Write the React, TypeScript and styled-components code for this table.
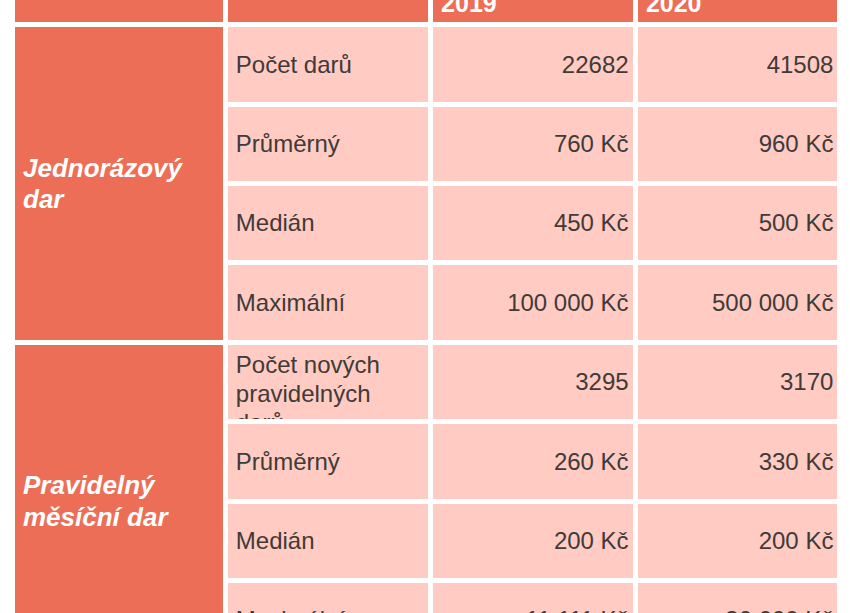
import React from "react";
import styled, { createGlobalStyle } from "styled-components";

const GlobalStyle = createGlobalStyle`
  html, body {
    margin: 0;
    padding: 0;
    background: #ffffff;
  }
  body {
    font-family: "Liberation Sans", Arial, Helvetica, sans-serif;
  }
`;

const ORANGE = "#ec6e56";
const PINK = "#ffcbc2";
const TEXT = "#403a39";

const Table = styled.div`
  display: grid;
  grid-template-columns: 207.5px 200px 199.5px 199.5px;
  grid-template-rows: 40px;
  grid-auto-rows: 74.4px;
  column-gap: 5.3px;
  row-gap: 5px;
  margin: -17.7px 0 0 15px;
  width: max-content;
`;

const HeadCell = styled.div`
  background: ${ORANGE};
  color: #ffffff;
  font-size: 25px;
  font-weight: 700;
  line-height: 1.2;
  display: flex;
  align-items: center;
  padding: 1px 8px 0;
`;

const GroupCell = styled.div<{ $span: number }>`
  grid-row: span ${(p) => p.$span};
  background: ${ORANGE};
  color: #ffffff;
  font-size: 26px;
  font-weight: 700;
  font-style: italic;
  line-height: 1.21;
  display: flex;
  align-items: center;
  padding: 1px 8px 0;
  overflow: hidden;
`;

const Cell = styled.div<{ $align?: "left" | "right" }>`
  background: ${PINK};
  color: ${TEXT};
  font-size: 24px;
  line-height: 1.2;
  display: flex;
  align-items: safe center;
  justify-content: ${(p) => (p.$align === "right" ? "flex-end" : "flex-start")};
  text-align: ${(p) => p.$align ?? "left"};
  padding: ${(p) => (p.$align === "right" ? "6.5px 4px 5.5px 8px" : "6.5px 8px 5.5px")};
  overflow: hidden;
  box-sizing: border-box;
`;

const LabelCell = styled(Cell)`
  grid-column: 2;
`;

const CellText = styled.span`
  display: block;
`;

type Row = { label: string; v2019: string; v2020: string };
type Group = { title: string; rows: Row[] };

const groups: Group[] = [
  {
    title: "Jednorázový dar",
    rows: [
      { label: "Počet darů", v2019: "22682", v2020: "41508" },
      { label: "Průměrný", v2019: "760 Kč", v2020: "960 Kč" },
      { label: "Medián", v2019: "450 Kč", v2020: "500 Kč" },
      { label: "Maximální", v2019: "100 000 Kč", v2020: "500 000 Kč" },
    ],
  },
  {
    title: "Pravidelný měsíční dar",
    rows: [
      { label: "Počet nových pravidelných darů", v2019: "3295", v2020: "3170" },
      { label: "Průměrný", v2019: "260 Kč", v2020: "330 Kč" },
      { label: "Medián", v2019: "200 Kč", v2020: "200 Kč" },
      { label: "Maximální", v2019: "11 111 Kč", v2020: "30 000 Kč" },
    ],
  },
];

export default function App() {
  return (
    <>
      <GlobalStyle />
      <Table>
        <HeadCell />
        <HeadCell />
        <HeadCell>2019</HeadCell>
        <HeadCell>2020</HeadCell>
        {groups.map((g) => (
          <React.Fragment key={g.title}>
            <GroupCell $span={g.rows.length}>{g.title}</GroupCell>
            {g.rows.map((r, i) => (
              <React.Fragment key={r.label + i}>
                <LabelCell>
                  <CellText>{r.label}</CellText>
                </LabelCell>
                <Cell $align="right">
                  <CellText>{r.v2019}</CellText>
                </Cell>
                <Cell $align="right">
                  <CellText>{r.v2020}</CellText>
                </Cell>
              </React.Fragment>
            ))}
          </React.Fragment>
        ))}
      </Table>
    </>
  );
}
